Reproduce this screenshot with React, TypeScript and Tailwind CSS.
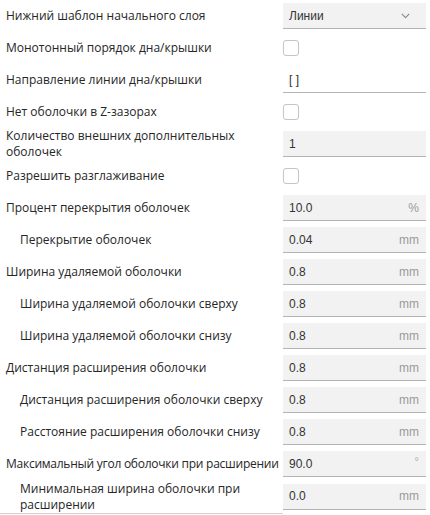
import React from "react";

type Row =
  | { kind: "select"; label: string; value: string; indent?: boolean }
  | { kind: "check"; label: string; indent?: boolean }
  | { kind: "text"; label: string; value: string; indent?: boolean }
  | { kind: "num"; label: string; value: string; unit?: string; indent?: boolean; tall?: boolean; second?: string; tight?: boolean };

const rows: Row[] = [
  { kind: "select", label: "Нижний шаблон начального слоя", value: "Линии" },
  { kind: "check", label: "Монотонный порядок дна/крышки" },
  { kind: "text", label: "Направление линии дна/крышки", value: "[ ]" },
  { kind: "check", label: "Нет оболочки в Z-зазорах" },
  { kind: "num", label: "Количество внешних дополнительных", second: "оболочек", value: "1" },
  { kind: "check", label: "Разрешить разглаживание" },
  { kind: "num", label: "Процент перекрытия оболочек", value: "10.0", unit: "%" },
  { kind: "num", label: "Перекрытие оболочек", value: "0.04", unit: "mm", indent: true },
  { kind: "num", label: "Ширина удаляемой оболочки", value: "0.8", unit: "mm" },
  { kind: "num", label: "Ширина удаляемой оболочки сверху", value: "0.8", unit: "mm", indent: true },
  { kind: "num", label: "Ширина удаляемой оболочки снизу", value: "0.8", unit: "mm", indent: true },
  { kind: "num", label: "Дистанция расширения оболочки", value: "0.8", unit: "mm" },
  { kind: "num", label: "Дистанция расширения оболочки сверху", value: "0.8", unit: "mm", indent: true },
  { kind: "num", label: "Расстояние расширения оболочки снизу", value: "0.8", unit: "mm", indent: true },
  { kind: "num", label: "Максимальный угол оболочки при расширении", value: "90.0", unit: "°", tight: true },
  { kind: "num", label: "Минимальная ширина оболочки при", second: "расширении", value: "0.0", unit: "mm", indent: true, tall: true },
];

const valueFont = { fontFamily: '"Liberation Sans", Arial, sans-serif' };

function Control({ row }: { row: Row }) {
  if (row.kind === "check") {
    return <div className="w-4 h-4 rounded-[3px] border border-[#c4c4c4] bg-white" />;
  }
  if (row.kind === "select") {
    return (
      <div className="h-[26px] w-[143px] bg-[#f2f2f2] border-b border-[#b4b4b4] flex items-center justify-between pl-[6px] pr-[16px] text-[12px] text-[#333]" style={valueFont}>
        <span>{row.value}</span>
        <svg width="9" height="6" viewBox="0 0 9 6" fill="none">
          <path d="M0.8 0.8 L4.5 4.6 L8.2 0.8" stroke="#8a8a8a" strokeWidth="1.1" />
        </svg>
      </div>
    );
  }
  if (row.kind === "text") {
    return (
      <div className="h-[26px] w-[143px] border-b border-[#b4b4b4] flex items-center pl-[6px] text-[12px] text-[#333]" style={valueFont}>
        <span>{row.value}</span>
      </div>
    );
  }
  return (
    <div className="h-[26px] w-[143px] bg-[#f2f2f2] border-b border-[#b4b4b4] flex items-center justify-between pl-[6px] pr-[7px] text-[12px]" style={valueFont}>
      <span className="text-[#333]">{row.value}</span>
      {row.unit && (
        <span className={row.unit === "°" ? "text-[#aaa] text-[11px] -mt-1" : "text-[#9a9a9a]"}>{row.unit}</span>
      )}
    </div>
  );
}

export default function App() {
  return (
    <div className="w-[430px] h-[515px] bg-white overflow-hidden" style={{ fontFamily: '"Open Sans", "Noto Sans", sans-serif' }}>
      {rows.map((row, i) => (
        <div key={i} className={`flex items-center ${row.kind === "num" && row.tall ? "h-[33px]" : "h-8"}`}>
          <div
            className={`w-[283px] shrink-0 text-[12px] leading-4 whitespace-nowrap overflow-hidden text-[#262626] ${row.indent ? "pl-[20px]" : "pl-[6px]"} ${row.kind === "num" && row.tight ? "tracking-[-0.25px]" : ""}`}
          >
            {row.label}
            {row.kind === "num" && row.second && (
              <>
                <br />
                {row.second}
              </>
            )}
          </div>
          <Control row={row} />
        </div>
      ))}
      <div className="h-px w-[283px] bg-[#d0d0d0]" />
    </div>
  );
}
